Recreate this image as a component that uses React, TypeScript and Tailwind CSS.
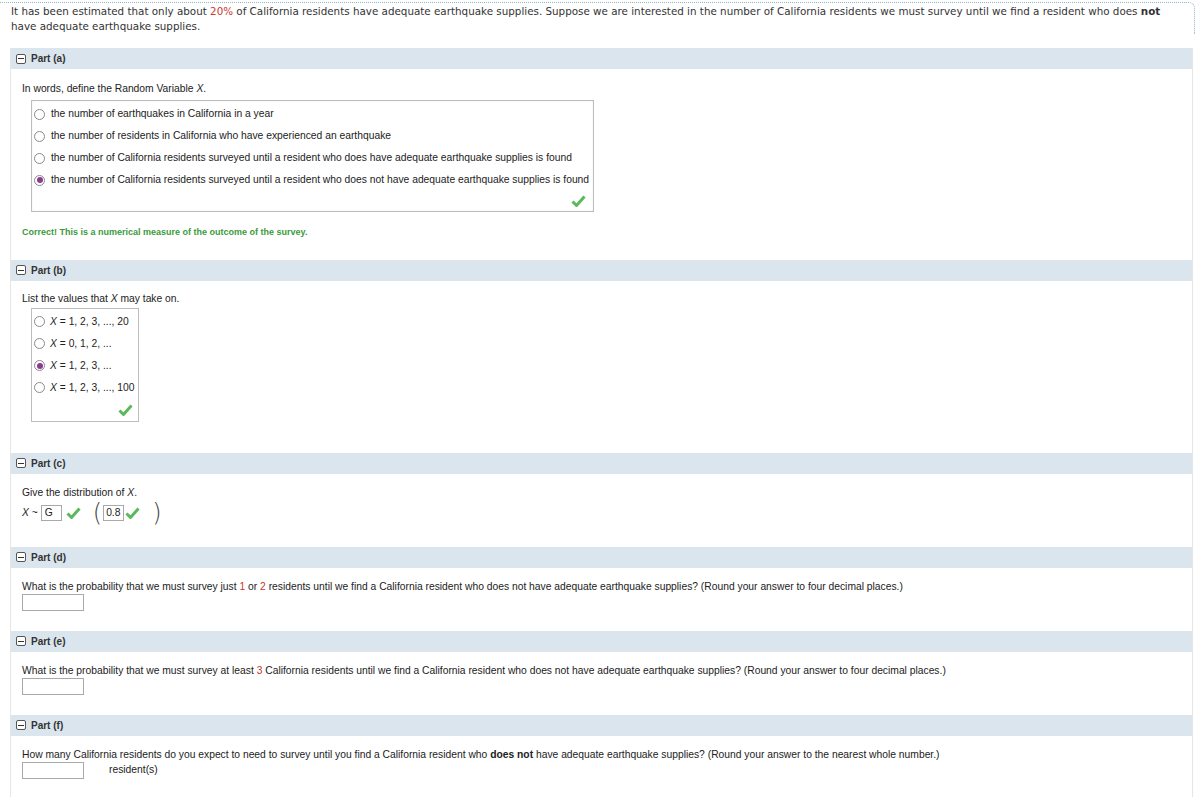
import React from "react";

const Check = () => (
  <svg width="15" height="12" viewBox="0 0 15 12" className="inline-block">
    <path d="M1.5 6.5 L5.5 10.5 L13.5 1.5" fill="none" stroke="#5cb85c" strokeWidth="3" strokeLinejoin="round" />
  </svg>
);

const Radio = ({ checked = false }: { checked?: boolean }) => (
  <span className="inline-flex h-[11px] w-[11px] shrink-0 items-center justify-center rounded-full border border-[#8a8a8a] bg-white">
    {checked && <span className="h-[6px] w-[6px] rounded-full bg-[#8b3a8f]" />}
  </span>
);

const PartHeader = ({ label }: { label: string }) => (
  <div className="flex h-[21px] items-center gap-[5px] bg-[#dae5ee] pl-[5px] text-[10px] font-bold text-[#333]">
    <span className="flex h-[10px] w-[10px] items-center justify-center rounded-[2px] border border-[#555] bg-white">
      <span className="h-px w-[6px] bg-[#333]" />
    </span>
    <span>Part ({label})</span>
  </div>
);

const Red = ({ children }: { children: React.ReactNode }) => <span className="text-[#c8382c]">{children}</span>;
const X = () => <i>X</i>;

const AnswerBox = () => <div className="h-[17px] w-[62px] border border-[#a9a9a9] bg-white" />;

export default function App() {
  const partAOptions = [
    "the number of earthquakes in California in a year",
    "the number of residents in California who have experienced an earthquake",
    "the number of California residents surveyed until a resident who does have adequate earthquake supplies is found",
    "the number of California residents surveyed until a resident who does not have adequate earthquake supplies is found",
  ];
  const partBOptions = ["1, 2, 3, ..., 20", "0, 1, 2, ...", "1, 2, 3, ...", "1, 2, 3, ..., 100"];

  return (
    <div className="h-[797px] w-[1200px] overflow-hidden bg-white font-['Liberation_Sans',Arial,sans-serif] text-[10.3px] text-[#222]">
      {/* intro */}
      <div className="mt-[2px] w-[1195px] rounded-tr-[6px] border-t border-r border-dotted border-[#8fb8c8] pl-[11px] pt-[1px] font-['DejaVu_Sans',Verdana,sans-serif] text-[10.35px] leading-[15px] whitespace-nowrap text-[#333]">
        It has been estimated that only about <Red>20%</Red> of California residents have adequate earthquake supplies. Suppose we are interested in the number of California residents we must survey until we find a resident who does <b>not</b>
        <br />
        have adequate earthquake supplies.
      </div>

      <div className="ml-[10px] mt-[14px] w-[1183px] border-r border-l border-[#e6e6e6]">
        {/* Part (a) */}
        <PartHeader label="a" />
        <div className="pb-[20px] pl-[11px] pt-[13px]">
          <div className="leading-[14px]">
            In words, define the Random Variable <X />.
          </div>
          <div className="ml-[9px] mt-[4px] w-[563px] border border-[#bdbdbd] pt-[2px] shadow-[inset_0_0_2px_rgba(0,0,0,0.08)]">
            {partAOptions.map((t, i) => (
              <div key={i} className="flex h-[22px] items-center gap-[6px] whitespace-nowrap pl-[2px]">
                <Radio checked={i === 3} />
                <span>{t}</span>
              </div>
            ))}
            <div className="flex h-[20px] items-center justify-end pr-[7px]">
              <Check />
            </div>
          </div>
          <div className="mt-[14px] text-[9px] font-bold text-[#3c9a3c]">Correct! This is a numerical measure of the outcome of the survey.</div>
        </div>

        {/* Part (b) */}
        <PartHeader label="b" />
        <div className="pb-[31px] pl-[11px] pt-[11px]">
          <div className="leading-[14px]">
            List the values that <X /> may take on.
          </div>
          <div className="ml-[9px] mt-[2px] w-[108px] border border-[#bdbdbd] pt-[2px]">
            {partBOptions.map((t, i) => (
              <div key={i} className="flex h-[22px] items-center gap-[5px] whitespace-nowrap pl-[2px]">
                <Radio checked={i === 2} />
                <span>
                  <X /> = {t}
                </span>
              </div>
            ))}
            <div className="flex h-[22px] items-center justify-end pr-[5px]">
              <Check />
            </div>
          </div>
        </div>

        {/* Part (c) */}
        <PartHeader label="c" />
        <div className="pb-[21px] pl-[11px] pt-[12px]">
          <div className="leading-[14px]">
            Give the distribution of <X />.
          </div>
          <div className="flex h-[26px] items-center">
            <span>
              <X /> ~
            </span>
            <div className="ml-[3px] flex h-[16px] w-[21px] items-center border border-[#a9a9a9] pl-[3px]">G</div>
            <span className="ml-[4px]">
              <Check />
            </span>
            <span className="ml-[12px] font-['DejaVu_Sans',sans-serif] text-[24px] font-extralight leading-none text-[#444]">(</span>
            <div className="ml-[1px] flex h-[16px] w-[21px] items-center border border-[#a9a9a9] pl-[2px]">0.8</div>
            <span className="ml-[1px]">
              <Check />
            </span>
            <span className="ml-[12px] font-['DejaVu_Sans',sans-serif] text-[24px] font-extralight leading-none text-[#444]">)</span>
          </div>
        </div>

        {/* Part (d) */}
        <PartHeader label="d" />
        <div className="pb-[20px] pl-[11px] pt-[12px]">
          <div className="leading-[14px]">
            What is the probability that we must survey just <Red>1</Red> or <Red>2</Red> residents until we find a California resident who does not have adequate earthquake supplies? (Round your answer to four decimal places.)
          </div>
          <div>
            <AnswerBox />
          </div>
        </div>

        {/* Part (e) */}
        <PartHeader label="e" />
        <div className="pb-[20px] pl-[11px] pt-[12px]">
          <div className="leading-[14px]">
            What is the probability that we must survey at least <Red>3</Red> California residents until we find a California resident who does not have adequate earthquake supplies? (Round your answer to four decimal places.)
          </div>
          <div>
            <AnswerBox />
          </div>
        </div>

        {/* Part (f) */}
        <PartHeader label="f" />
        <div className="pb-[30px] pl-[11px] pt-[12px]">
          <div className="leading-[14px]">
            How many California residents do you expect to need to survey until you find a California resident who <b>does not</b> have adequate earthquake supplies? (Round your answer to the nearest whole number.)
          </div>
          <div className="flex items-center gap-[25px]">
            <AnswerBox />
            <span>resident(s)</span>
          </div>
        </div>
      </div>
    </div>
  );
}
